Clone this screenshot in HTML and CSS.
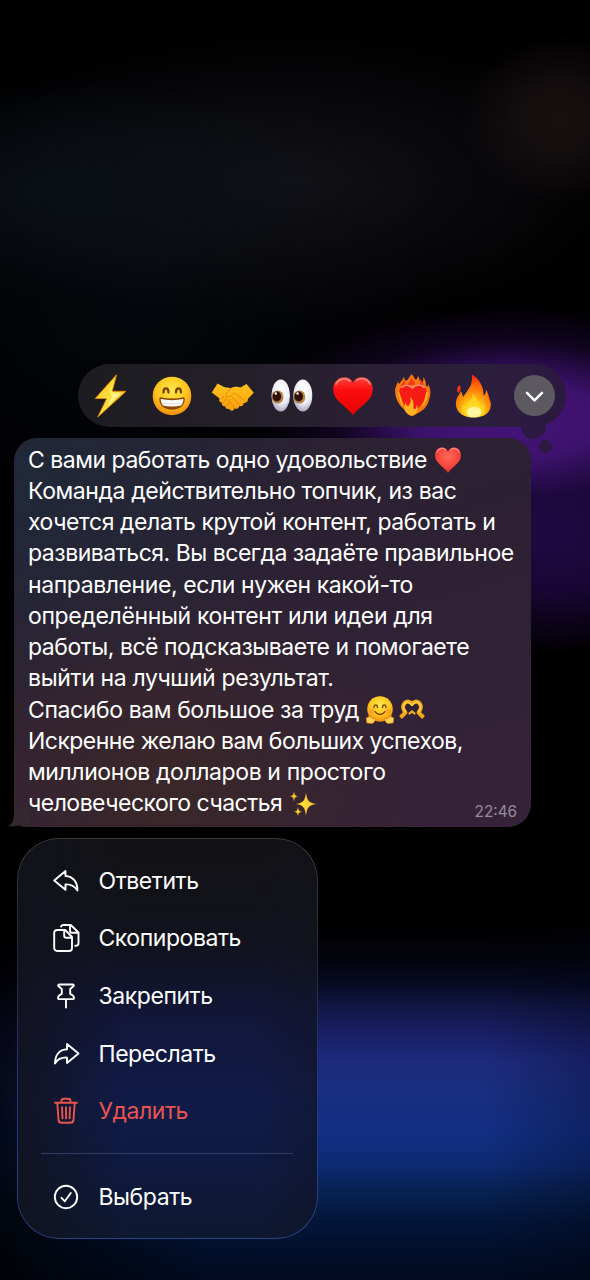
FILE: index.html
```html
<!DOCTYPE html>
<html lang="ru">
<head>
<meta charset="utf-8">
<title>Сообщение</title>
<link rel="stylesheet" href="styles.css">
</head>
<body>
<svg class="defs" width="0" height="0" aria-hidden="true">
  <defs>
    <radialGradient id="face" cx=".5" cy=".35" r=".65"><stop offset="0" stop-color="#ffe94a"/><stop offset=".6" stop-color="#ffc51e"/><stop offset="1" stop-color="#f28a0c"/></radialGradient>
    <linearGradient id="bolt" x1="0" y1="0" x2="1" y2="1"><stop offset="0" stop-color="#ffb300"/><stop offset=".5" stop-color="#fff05a"/><stop offset="1" stop-color="#ff9500"/></linearGradient>
    <linearGradient id="hand" x1="0" y1="0" x2="0" y2="1"><stop offset="0" stop-color="#ffc51c"/><stop offset="1" stop-color="#fb9d0a"/></linearGradient>
    <radialGradient id="eye" cx=".55" cy=".3" r=".75"><stop offset="0" stop-color="#fff"/><stop offset=".6" stop-color="#ececf4"/><stop offset="1" stop-color="#9d9ab5"/></radialGradient>
    <linearGradient id="red" x1="0" y1="0" x2="0" y2="1"><stop offset="0" stop-color="#ff453c"/><stop offset=".35" stop-color="#fb0d0d"/><stop offset="1" stop-color="#e80202"/></linearGradient>
    <radialGradient id="softred" cx=".5" cy=".35" r=".7"><stop offset="0" stop-color="#ff675a"/><stop offset=".6" stop-color="#f5453c"/><stop offset="1" stop-color="#d91f1d"/></radialGradient>
    <radialGradient id="flame" cx=".5" cy=".88" r=".85"><stop offset="0" stop-color="#fffbb0"/><stop offset=".25" stop-color="#ffd91f"/><stop offset=".5" stop-color="#ff9a0a"/><stop offset=".8" stop-color="#ff5a0a"/><stop offset="1" stop-color="#f52c0c"/></radialGradient>
    <radialGradient id="star"><stop offset="0" stop-color="#ffe03a"/><stop offset="1" stop-color="#f5bd2c"/></radialGradient>
  </defs>
</svg>

<main class="screen">
  <section class="reactions">
    <button class="reaction" aria-label="Молния"><svg viewBox="0 0 44 44"><path d="M27.500 .8 6.300 24.500 17.800 24.500 8.800 43 37 17.300 23.200 17.300Z" fill="url(#bolt)" stroke="#e88600" stroke-width="1"/><path d="M26 4 19.500 19 32.500 18.800 13 36.500 20.500 22.800 9.500 23Z" fill="#ffd833"/><path d="m21 19.500 11-.5L18 32l5-10z" fill="#fff58a"/></svg></button>
    <button class="reaction" aria-label="Улыбка"><svg viewBox="0 0 44 44"><circle cx="22" cy="22" r="19.300" fill="url(#face)"/><path d="M13.500 18.500c0-5.500 5-5.500 5 0M26 18.500c0-5.500 5-5.500 5 0" fill="none" stroke="#794100" stroke-width="2.300" stroke-linecap="round"/><path d="M9.300 25.200c0-1.600 1-2.100 2.300-1.800 7 1.300 14 1.300 21 0 1.300-.3 2.200.2 2.200 1.800 0 14-25.500 14-25.500 0z" fill="#8a4a0c"/><path d="M10.700 25c7.500 1.500 15.200 1.500 22.700 0 0 3-1 5-2.400 6.600-5.700 1.200-12.200 1.200-17.900 0-1.400-1.600-2.400-3.600-2.400-6.600z" fill="#fff"/><path d="M11.800 29.200c6.500 1 14 1 20.500 0" fill="none" stroke="#d4cfcf" stroke-width=".8"/></svg></button>
    <button class="reaction" aria-label="Рукопожатие"><svg viewBox="0 0 44 44"><path d="M7.500 9.500 14 13l7 1.200c3-1.700 6.300-1.700 9.500-.8L36.500 10l7.300 8.800-5.800 6c.2 3.400-3 4.500-4.300 4.200-.1 2.900-2.500 3.900-4.300 3-.7 2.800-3 3.500-5 2.200-.8 3.500-4.200 3-5.200.5-2.200 1-4.200-.6-4-2.600-2.500.5-4-1.700-3.200-3.400-2.500-.5-3.500-2-2.500-4.200L1.800 18.500z" fill="url(#hand)"/><path d="M21 14.500c-2.500 2-4.500 4.500-5 6.500-.5 2 3 2.300 5 .8l4-3 10 8.700M22 23l7.500 7.800M18.500 26l5.700 7.500M11 25.500l3-3.300M13 29l3.500-4.500M16.700 31.500l2.500-3.500" fill="none" stroke="#e18a06" stroke-width=".95" stroke-linecap="round"/></svg></button>
    <button class="reaction" aria-label="Глаза"><svg viewBox="0 0 44 44"><ellipse cx="10.700" cy="21.500" rx="9.300" ry="16" fill="url(#eye)"/><ellipse cx="32.800" cy="21.500" rx="9.500" ry="16" fill="url(#eye)"/><ellipse cx="7.600" cy="23" rx="5.900" ry="6.600" fill="#b58340"/><ellipse cx="29.400" cy="23" rx="5.900" ry="6.600" fill="#b58340"/><ellipse cx="6.900" cy="22.500" rx="4.300" ry="4.900" fill="#301006"/><ellipse cx="28.700" cy="22.500" rx="4.300" ry="4.900" fill="#301006"/><circle cx="5.800" cy="19.500" r="1.200" fill="#fff"/><circle cx="27.600" cy="19.500" r="1.200" fill="#fff"/></svg></button>
    <button class="reaction" aria-label="Сердце"><svg viewBox="0 0 44 44"><path d="M22 8.500C18.500 0 2.500 1.500 2.200 15 2 26.500 15.500 32.500 22 41 28.500 32.500 42 26.500 41.800 15 41.500 1.500 25.500 0 22 8.500z" fill="url(#red)"/><path d="M5 10c2.500-5 9-7 14-3M26 6c5-3 11-1 13 4" fill="none" stroke="#ff9e92" stroke-width="1.800" stroke-linecap="round" opacity=".7"/></svg></button>
    <button class="reaction" aria-label="Сердце в огне"><svg viewBox="0 0 44 44"><path d="M22 42C12 36 4.500 29 4 17c0-4 2-6 3-10 .5 3 1 3 2 2 2-3 3-4 4-6 1 4 2 5 4 2 1-2 3-3 3-5 3 2 3 4 4 5 2 2 2-1 3-3 2 3 1 5 4 7 1-1 2-3 1-6 4 4 2 8 4 10 1-1 1-2 1-3 4 7 2 12 1 16C36 35 29 38 22 42z" fill="#f9780f"/><path d="M17 11c0-3 3-4 3.500-8 1 4 4 4 3.500 8zM10 13c0-3 2-4 3-7 1 3 2 4 1 7zM29 12c0-3 1-4 0-7 3 3 4 5 3 8z" fill="#fb3a14"/><path d="M21.500 14c-3-6-13-4-13 4 0 10 8 15 13 24 5-9 14-13 14-24 0-8-11-10-14-4z" fill="#f51c16"/><path d="M10.500 14c2-3.500 7-4 11 0 3-4 9-4 12 0" fill="none" stroke="#ff8f70" stroke-width="1.500"/><path d="M7.500 19c2 5 3 8 3.500 12M36 19c-1 6-2 9-4 12" fill="none" stroke="#ffac1d" stroke-width="2" stroke-linecap="round"/><path d="M20 42C12 38 12.500 33 15 28c0 4 2 5 3 3 2-3 2-5 1-8 6 5 2 10 4 12 2 1 2-2 3-4 2 6 0 9-6 11z" fill="#ffb322"/></svg></button>
    <button class="reaction" aria-label="Огонь"><svg viewBox="0 0 44 44"><path d="M22 43.500C8 44 1 34 5 24c1.500-3 3-4 3.500-7 2 2 2 4 2.500 6 5-7 10-12 9-22.500 8 5 12 13 11.500 21 2-1 2.500-4 2.500-6 3 5 2.500 7 4 11 3 8-2 17-16 17z" fill="url(#flame)"/><path d="M7.500 11c2 3 1 5-1 8-2-2-2-5 1-8z" fill="#fb3510"/><path d="M20 19c2 7-4 8-6 14-2-1-2-3-2-4-6 9 1 14 10 14s15-6 8-14c0 2-1 3-2 4-1-6-4-10-8-14z" fill="#ffd51f" opacity=".75"/><ellipse cx="22" cy="38" rx="7.500" ry="5.300" fill="#fff9b5" opacity=".85"/></svg></button>
    <button class="reaction more" aria-label="Ещё"><span class="more-disc"><svg viewBox="0 0 42 42"><path d="m13.300 18.300 7.700 7.700 7.700-7.700" fill="none" stroke="#fff" stroke-width="2.500" stroke-linecap="round" stroke-linejoin="round"/></svg></span></button>
    <span class="thought thought-big"></span><span class="thought thought-small"></span>
  </section>

  <article class="bubble">
    <svg class="tail" viewBox="0 0 22 18"><path d="M6 0v6c0 5-2 9-6 11.500 7 .6 12-1 15.500-4L22 17V0z" fill="#33292e"/></svg>
    <p class="line l1">С вами работать одно удовольствие <svg class="emoji heart" viewBox="0 0 28 28"><path d="M14 5.500C11.500-.8 1 0 1 9.500 1 17.500 10 20.500 14 27 18 20.500 27 17.500 27 9.500 27 0 16.500-.8 14 5.500z" fill="url(#softred)"/><path d="M3 6c2-4 6-4.500 8.500-2.500M17 3.500C20 1.500 23.500 2.500 25 6" fill="none" stroke="#ff9c90" stroke-width="1.400" stroke-linecap="round" opacity=".7"/></svg></p>
    <p class="line l2">Команда действительно топчик, из вас</p>
    <p class="line l3">хочется делать крутой контент, работать и</p>
    <p class="line l4">развиваться. Вы всегда задаёте правильное</p>
    <p class="line l5">направление, если нужен какой-то</p>
    <p class="line l6">определённый контент или идеи для</p>
    <p class="line l7">работы, всё подсказываете и помогаете</p>
    <p class="line l8">выйти на лучший результат.</p>
    <p class="line l9">Спасибо вам большое за труд <svg class="emoji hug" viewBox="0 0 28 28"><circle cx="14" cy="13" r="12.800" fill="url(#face)"/><path d="M8 11.500c.3-3.500 3.200-3.500 3.500 0M16.500 11.500c.3-3.500 3.200-3.500 3.500 0M9 15.500c2.500 4 7.500 4 10 0" fill="none" stroke="#794100" stroke-width="1.400" stroke-linecap="round"/><circle cx="6" cy="15" r="2.500" fill="#f78b37" opacity=".5"/><circle cx="22" cy="15" r="2.500" fill="#f78b37" opacity=".5"/><path d="M1 27c-1-3-1-5 0-6l1 1 1-2.500 1.500 2 1.500-1.500.5 3 2.500-1c1 1-.5 5-3 5.500zM27 27c1-3 1-5 0-6l-1 1-1-2.500-1.500 2-1.500-1.500-.5 3-2.500-1c-1 1 .5 5 3 5.500z" fill="#ffd258" stroke="#d98205" stroke-width=".7"/></svg><svg class="emoji hands" viewBox="0 0 28 28"><path d="M2.500 21.500 7.500 16.500C5 13.500 4 9.500 7 6.700c2-1.800 5-1.500 7 1C16 5.200 19 4.900 21 6.700c3 2.800 2 6.800-.5 9.800l5 5" fill="none" stroke="#f9a81a" stroke-width="3.900" stroke-linejoin="round"/><path d="M7.500 15.500C5 12.500 4.500 9.300 7 7.200c2-1.700 4.700-.6 7 2 2.300-2.600 5-3.700 7-2 2.500 2.100 2 5.300-.5 8.300" fill="none" stroke="#ffd448" stroke-width="1.400" stroke-linecap="round"/><path d="m11.500 17.500 2.500-2 2.500 2" fill="none" stroke="#f9b424" stroke-width="2.200" stroke-linecap="round"/></svg></p>
    <p class="line l10">Искренне желаю вам больших успехов,</p>
    <p class="line l11">миллионов долларов и простого</p>
    <p class="line l12">человеческого счастья <svg class="emoji sparkle" viewBox="0 0 28 28"><path d="M16 2.500c1.200 8 2 10 10.500 11.500C18 15.500 17.200 17.500 16 26c-1.200-8.500-2-10.500-10-12 8-1.500 8.800-3.500 10-11.500zM4 1c.5 4 1 4.500 4 5.200C5 7 4.500 7.500 4 11.500 3.500 7.500 3 7 0 6.200 3 5.500 3.500 5 4 1zM8 17c.5 3.500 1 4 4 4.700-3 .8-3.500 1.300-4 4.600-.5-3.300-1-3.800-4-4.600 3-.7 3.500-1.200 4-4.700z" fill="url(#star)"/></svg></p>
    <time class="time">22:46</time>
  </article>

  <nav class="menu">
    <a class="item"><svg class="icon" viewBox="0 0 30 30"><path d="M14.500 5 3.200 14.400 14.500 23.800V18.400C19.500 18.100 23.500 19.800 26.500 24.500 26.500 16 22 10.400 14.500 10z"/></svg><span>Ответить</span></a>
    <a class="item"><svg class="icon" viewBox="0 0 30 30"><path d="M6.200 7h8l6.800 7v11a3 3 0 0 1-3 3H6.200a3 3 0 0 1-3-3V10a3 3 0 0 1 3-3zM13.200 7.200v5.600a2 2 0 0 0 2 2H20.800M10 3.500c.5-1 1.300-1.500 2.500-1.500h7.300L27.500 9.500V20a2.800 2.800 0 0 1-2.800 2.800h-.5M19 2.200v5.600a2 2 0 0 0 2 2h6"/></svg><span>Скопировать</span></a>
    <a class="item"><svg class="icon" viewBox="0 0 30 30"><path d="M8 3.500h14c1 0 1 1.200.4 1.800L19.200 8v4.800c2.300 1 3.800 2.800 3.800 4.300 0 .7-.3 1-1 1H8c-.7 0-1-.3-1-1 0-1.500 1.500-3.300 3.800-4.300V8L7.600 5.300C7 4.700 7 3.500 8 3.500zM15 18.200v8.300"/></svg><span>Закрепить</span></a>
    <a class="item"><svg class="icon" viewBox="0 0 30 30"><path d="M16 5 27.500 14.500 16 24v-5.400C11 18.300 6.800 20 4 24.500 4 16 8.500 10.600 16 10.200z"/></svg><span>Переслать</span></a>
    <a class="item danger"><svg class="icon" viewBox="0 0 30 30"><path d="M4 6.700h22M10.500 6.500V5c0-1.400.9-2.300 2.300-2.300h4.400c1.400 0 2.300.9 2.300 2.300v1.500M6.300 7l1.200 16.800c.2 2 1.200 3 3.200 3h8.600c2 0 3-1 3.200-3L23.700 7M11 11.200l.5 11.200M15 11.200v11.200M19 11.200l-.5 11.200"/></svg><span>Удалить</span></a>
    <hr class="divider">
    <a class="item"><svg class="icon" viewBox="0 0 30 30"><circle cx="15" cy="15" r="11.200"/><path d="m10.500 15.800 3.300 3.500 6-8.300"/></svg><span>Выбрать</span></a>
  </nav>
</main>
</body>
</html>
```
FILE: styles.css
```css
* { box-sizing: border-box; }
body { margin: 0; background: #000; }
.defs { position: absolute; }
.screen {
  width: 590px;
  height: 1280px;
  padding-top: 364px;
  overflow: hidden;
  font-family: Inter, "Noto Sans", sans-serif;
  color: #fff;
  background:
    radial-gradient(ellipse 100px 85px at 560px 118px, #171011 0%, rgba(23,16,17,.8) 40%, rgba(23,16,17,0) 100%),
    radial-gradient(ellipse 260px 110px at 70px 190px, #0a1016 0%, rgba(10,16,22,0) 100%),
    radial-gradient(ellipse 340px 150px at 290px 180px, #121217 0%, rgba(18,18,23,0) 100%),
    radial-gradient(ellipse 300px 240px at 130px 300px, #04060b 0%, rgba(4,6,11,0) 100%),
    radial-gradient(ellipse 260px 115px at 510px 420px, #45147a 0%, #3d126d 35%, rgba(32,9,65,.5) 68%, rgba(10,3,20,0) 100%),
    radial-gradient(ellipse 180px 120px at 550px 535px, #1e0a42 0%, #180735 45%, rgba(10,3,20,0) 100%),
    linear-gradient(90deg, rgba(0,0,0,.8) 0%, rgba(0,0,0,0) 35%, rgba(0,0,0,0) 82%, rgba(0,0,12,.25) 100%) 0 930px / 100% 350px no-repeat,
    linear-gradient(180deg, #000 0, #000 920px, #03030b 955px, #080b24 985px, #121747 1008px, #192066 1035px, #1c2a7d 1060px, #192e80 1090px, #122e82 1135px, #0e2a72 1165px, #07204f 1195px, #03163a 1220px, #010e28 1255px, #010a20 1280px);
}

/* Reaction picker */
.reactions {
  position: relative;
  z-index: 1;
  display: grid;
  grid-template-columns: repeat(8, 60.400px);
  align-items: center;
  justify-content: center;
  width: 488px;
  height: 63px;
  margin-left: 78px;
  padding-left: 1.400px;
  border-radius: 32px;
  background: linear-gradient(90deg, #1c1c20 0%, #232028 32%, #2a2034 60%, #2c1e3d 85%, #2b193f 100%);
}
.reaction {
  display: flex;
  justify-content: center;
  padding: 0;
  border: 0;
  background: none;
}
.reaction svg { display: block; width: 44px; height: 44px; overflow: visible; }
.more-disc { width: 41px; height: 41px; border-radius: 50%; background: #5c5a60; }
.reaction .more-disc svg { width: 41px; height: 41px; }
.thought { position: absolute; border-radius: 50%; background: #2c1a42; }
.thought-big { left: 443px; top: 50px; width: 25px; height: 25px; z-index: -1; }
.thought-small { left: 461px; top: 76px; width: 13px; height: 13px; }

/* Message */
.bubble {
  position: relative;
  width: 517px;
  height: 388.500px;
  margin: 11px 0 0 14px;
  padding: 6.500px 14px 0;
  border-radius: 23px 23px 23px 10px;
  background:
    radial-gradient(ellipse 270px 210px at 155px 350px, #3a2729 0%, rgba(58,39,41,0) 100%),
    radial-gradient(ellipse 310px 260px at 0 40px, #202838 0%, rgba(32,40,56,0) 100%),
    linear-gradient(165deg, #292231 0%, #2d2133 45%, #36233a 100%);
}
.tail { position: absolute; left: -6px; bottom: 0; width: 22px; height: 18px; }
.line {
  display: flex;
  align-items: center;
  height: 31.250px;
  margin: 0;
  white-space: pre;
  font-size: 23px;
  line-height: 31.250px;
}
.l1 { letter-spacing: -.485px; }
.l2 { letter-spacing: -.4px; }
.l3 { letter-spacing: -.42px; }
.l4 { letter-spacing: -.48px; }
.l5 { letter-spacing: -.41px; }
.l6 { letter-spacing: -.35px; }
.l7 { letter-spacing: -.48px; }
.l8 { letter-spacing: -.36px; }
.l9 { letter-spacing: -.4px; }
.l10 { letter-spacing: -.54px; }
.l11 { letter-spacing: -.4px; }
.l12 { letter-spacing: -.52px; }
.emoji { flex: none; width: 28px; height: 28px; }
.heart { margin-left: 1px; }
.hug { margin-left: 1px; }
.hands { margin-left: 3.500px; }
.sparkle { margin-left: 2px; }
.time {
  position: absolute;
  right: 14px;
  bottom: 5px;
  font-size: 15.300px;
  line-height: 20px;
  color: #958b99;
}

/* Context menu */
.menu {
  width: 301.500px;
  height: 401px;
  margin: 11px 0 0 16.500px;
  padding: 13.500px 24px 0 25px;
  border: 1px solid transparent;
  border-radius: 42px;
  background:
    linear-gradient(90deg, rgba(17,19,28,.85) 0%, rgba(17,19,28,0) 35%, rgba(17,19,28,0) 80%, rgba(17,19,28,.35) 100%) padding-box,
    linear-gradient(180deg, #121214 0%, #11121c 25%, #12163a 46%, #101b48 66%, #0e1a42 78%, #0e1830 100%) padding-box,
    linear-gradient(180deg, #3b3b3e 0%, #26272e 30%, #26377d 60%, #294483 100%) border-box;
}
.item {
  display: flex;
  align-items: center;
  gap: 18px;
  height: 57.600px;
  padding-left: 8px;
  font-size: 23px;
  line-height: 30px;
  letter-spacing: -.44px;
}
.icon {
  flex: none;
  width: 30px;
  height: 30px;
  fill: none;
  stroke: currentColor;
  stroke-width: 1.900;
  stroke-linecap: round;
  stroke-linejoin: round;
}
.danger { color: #e9544f; }
.divider { height: 1px; margin: 13px 0 14px -2px; border: 0; background: #323b62; }
```
